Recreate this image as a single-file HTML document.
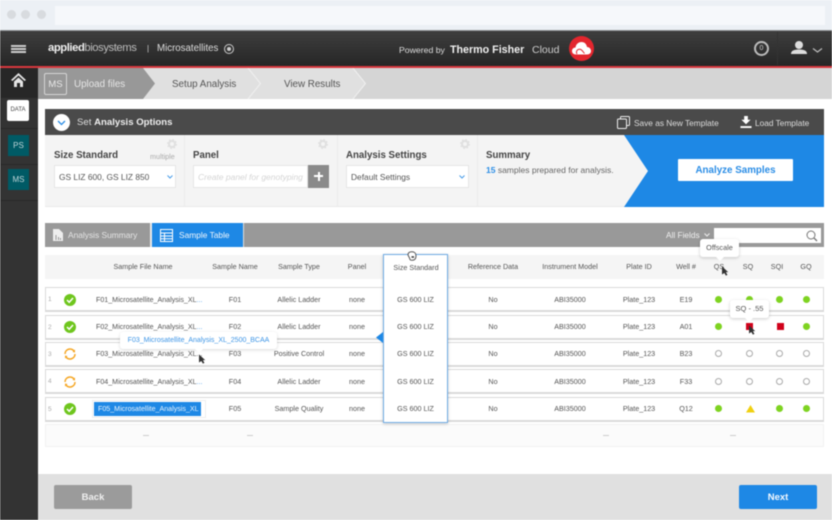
<!DOCTYPE html>
<html><head><meta charset="utf-8">
<style>
html,body{margin:0;padding:0;width:832px;height:520px;overflow:hidden;background:#fff}
body{font-family:"Liberation Sans",sans-serif;position:relative;color:#555}
#p{position:absolute;left:0;top:0;width:832px;height:520px;overflow:hidden;filter:blur(.5px)}
#p div,#p svg{position:absolute}
.t{white-space:nowrap;line-height:12px;height:12px}
.c{transform:translateX(-50%);text-align:center;white-space:nowrap;line-height:12px;height:12px;font-size:7.2px;color:#555}
.f{font-size:7.1px;color:#555;left:96px}
.row{left:45px;width:777px;border:1px solid #dadada;border-bottom:2px solid #dadada;height:22px;background:#fff}
.n{font-size:6.5px;color:#aaa;left:48px}
.g{width:7px;height:7px;border-radius:50%;background:#7ed321}
.o{width:5px;height:5px;border-radius:50%;border:1px solid #aaa;background:#fff}
</style></head><body><div id="p">

<!-- browser chrome -->
<div style="left:0;top:0;width:832px;height:30px;background:#ecf0f5"></div>
<div style="left:7px;top:10px;width:9px;height:9px;border-radius:50%;background:#d8dbdf"></div>
<div style="left:21px;top:10px;width:9px;height:9px;border-radius:50%;background:#d8dbdf"></div>
<div style="left:37px;top:10px;width:9px;height:9px;border-radius:50%;background:#d8dbdf"></div>
<div style="left:55px;top:6px;width:770px;height:19px;background:#f6f8fb"></div>

<!-- header -->
<div style="left:0;top:30px;width:832px;height:36px;background:linear-gradient(#3e3e3e,#262626);border-top:1px solid #8d9093;box-sizing:border-box"></div>
<div style="left:0;top:66px;width:832px;height:2px;background:#d9383e"></div>
<div style="left:11px;top:45px;width:15px;height:2px;background:#ccc"></div>
<div style="left:11px;top:48px;width:15px;height:2px;background:#ccc"></div>
<div style="left:11px;top:51px;width:15px;height:2px;background:#ccc"></div>
<div class="t" style="left:48px;top:42px;font-size:11.3px;color:#eee;letter-spacing:-.45px;line-height:13px;height:13px"><b>applied</b><span style="color:#bbb">biosystems</span></div>
<div class="t" style="left:147px;top:43px;font-size:8px;color:#ccc">|</div>
<div class="t" style="left:157px;top:43px;font-size:9.7px;color:#ddd">Microsatellites</div>
<div style="left:224px;top:44px;width:8px;height:8px;border:1px solid #ccc;border-radius:50%"></div>
<div style="left:227px;top:47px;width:4px;height:4px;background:#ccc;border-radius:50%"></div>
<div class="t" style="left:399px;top:44px;font-size:8.7px;color:#ddd">Powered by</div>
<div class="t" style="left:450px;top:44px;font-size:10.7px;font-weight:bold;color:#f0f0f0">Thermo Fisher</div>
<div class="t" style="left:532px;top:44px;font-size:10.5px;color:#ccc">Cloud</div>
<div style="left:569px;top:36px;width:25px;height:25px;border-radius:50%;background:#e3262e"></div>
<svg style="left:572px;top:41px" width="19" height="15" viewBox="0 0 19 15"><path d="M4 13.500C1.500 13.500 0 12 0 10S1.500 6.500 3.500 6.500C4 3 6.500 1 9.500 1S14.500 3 15 6C17.500 6 19 8 19 10S17.500 13.500 15 13.500Z" fill="#fff"/><path d="M5 13a3 3 0 0 1 5-3.500l1 1M12.500 12.500l-2-2.500" stroke="#e3262e" stroke-width="1" fill="none"/></svg>
<div style="left:754px;top:41px;width:11px;height:11px;border:2px solid #bbb;border-radius:50%;font-size:7px;line-height:11px;text-align:center;color:#ccc">0</div>
<div style="left:777px;top:32px;width:1px;height:33px;background:#333"></div>
<svg style="left:790px;top:40px" width="34" height="16" viewBox="0 0 34 16"><circle cx="9" cy="5" r="4" fill="#ddd"/><path d="M1 14C1 10.500 4 9.500 9 9.500S17 10.500 17 14Z" fill="#ddd"/><path d="M23 8.500l4.500 3.500 4.500-3.500" stroke="#bbb" stroke-width="1.200" fill="none"/></svg>

<!-- sidebar -->
<div style="left:0;top:68px;width:38px;height:452px;background:#333"></div>
<div style="left:1px;top:68px;width:37px;height:30px;background:#272727"></div>
<div style="left:1px;top:128px;width:37px;height:1px;background:#292929"></div>
<div style="left:1px;top:164px;width:37px;height:1px;background:#292929"></div>
<div style="left:1px;top:200px;width:37px;height:1px;background:#292929"></div>
<svg style="left:11px;top:73px" width="15" height="14" viewBox="0 0 15 14"><path d="M0 7L7.500 0 15 7 13.500 8 7.500 2.500 1.500 8Z M3 8.500L7.500 4.500 12 8.500V14H9V10H6V14H3Z" fill="#e4e4e4"/></svg>
<div style="left:7px;top:100px;width:22px;height:21px;background:#fff;border-radius:2px;font-size:6px;line-height:21px;text-align:center;color:#444">DATA</div>
<div style="left:8px;top:135px;width:21px;height:21px;background:#005a65;font-size:8px;line-height:21px;text-align:center;color:#bfd5d8">PS</div>
<div style="left:8px;top:169px;width:21px;height:21px;background:#005a65;font-size:8px;line-height:21px;text-align:center;color:#bfd5d8">MS</div>

<!-- breadcrumb -->
<div style="left:38px;top:68px;width:794px;height:31px;background:#d5d5d5"></div>
<svg style="left:38px;top:68px" width="340" height="31" viewBox="0 0 340 31">
<path d="M105 0H315L327.500 15.500 315 31H105Z" fill="#e0e0e0"/>
<path d="M315 0L327.500 15.500 315 31" fill="none" stroke="#f0f0f0"/>
<path d="M210 0L222.500 15.500 210 31" fill="none" stroke="#f0f0f0"/>
<path d="M0 0H105L117 15.500 105 31H0Z" fill="#989898"/>
</svg>
<div style="left:44px;top:73px;width:21px;height:20px;border:1px solid #d5d5d5;border-radius:2px;font-size:9.600px;line-height:21px;text-align:center;color:#e8e8e8">MS</div>
<div class="t" style="left:74px;top:79px;font-size:9.800px;color:#e6e6e6">Upload files</div>
<div class="t" style="left:172px;top:79px;font-size:9.800px;color:#555">Setup Analysis</div>
<div class="t" style="left:284px;top:79px;font-size:9.800px;color:#555">View Results</div>

<!-- options header -->
<div style="left:45px;top:109px;width:779px;height:26px;background:#4a4a4a"></div>
<div style="left:53px;top:114px;width:17px;height:17px;border-radius:50%;background:#fff"></div>
<svg style="left:57px;top:120px" width="9" height="6" viewBox="0 0 9 6"><path d="M1 1l3.500 3.500L8 1" stroke="#2a8de6" stroke-width="1.300" fill="none"/></svg>
<div class="t" style="left:77px;top:117px;font-size:9.600px;color:#ddd">Set <b style="color:#eee">Analysis Options</b></div>
<svg style="left:617px;top:116px" width="13" height="13" viewBox="0 0 13 13"><rect x="3.500" y=".5" width="9" height="9" rx="1" fill="none" stroke="#eee"/><rect x=".5" y="3" width="9" height="9.500" rx="1" fill="#4a4a4a" stroke="#eee"/></svg>
<div class="t" style="left:634px;top:117px;font-size:8.300px;color:#ddd">Save as New Template</div>
<svg style="left:740px;top:116px" width="12" height="12" viewBox="0 0 12 13"><path d="M4 0H8V4H11L6 9 1 4H4Z M0 11H12V13H0Z" fill="#fff"/></svg>
<div class="t" style="left:755px;top:117px;font-size:8.300px;color:#ddd">Load Template</div>

<!-- options body -->
<div style="left:45px;top:135px;width:779px;height:72px;background:#f4f4f4;border-bottom:1px solid #e8e8e8;box-sizing:border-box"></div>
<div style="left:184px;top:135px;width:1px;height:72px;background:#ebebeb"></div>
<div style="left:337px;top:135px;width:1px;height:72px;background:#ebebeb"></div>
<div style="left:477px;top:135px;width:1px;height:72px;background:#ebebeb"></div>
<svg style="left:624px;top:135px" width="200" height="72" viewBox="0 0 200 72"><path d="M0 0H200V72H0L24 36Z" fill="#1e88e5"/></svg>
<svg style="left:167px;top:139px" width="10" height="10" viewBox="0 0 10 10"><circle cx="5" cy="5" r="3" fill="none" stroke="#e0e0e0" stroke-width="2"/><circle cx="5" cy="5" r="4.300" fill="none" stroke="#e0e0e0" stroke-width="1.400" stroke-dasharray="1.700 1.700"/></svg>
<svg style="left:318px;top:139px" width="10" height="10" viewBox="0 0 10 10"><circle cx="5" cy="5" r="3" fill="none" stroke="#e0e0e0" stroke-width="2"/><circle cx="5" cy="5" r="4.300" fill="none" stroke="#e0e0e0" stroke-width="1.400" stroke-dasharray="1.700 1.700"/></svg>
<svg style="left:460px;top:139px" width="10" height="10" viewBox="0 0 10 10"><circle cx="5" cy="5" r="3" fill="none" stroke="#e0e0e0" stroke-width="2"/><circle cx="5" cy="5" r="4.300" fill="none" stroke="#e0e0e0" stroke-width="1.400" stroke-dasharray="1.700 1.700"/></svg>

<div class="t" style="left:54px;top:150px;font-size:9.700px;font-weight:bold;color:#444">Size Standard</div>
<div class="t" style="left:150px;top:151px;font-size:7.200px;color:#aaa">multiple</div>
<div style="left:54px;top:165px;width:122px;height:23px;background:#fff;border:1px solid #e6e6e6;box-sizing:border-box"></div>
<div class="t" style="left:59px;top:171px;font-size:8.400px;color:#555">GS LIZ 600, GS LIZ 850</div>
<svg style="left:167px;top:175px" width="6" height="4" viewBox="0 0 6 4"><path d="M.5 .5L3 3 5.500 .5" stroke="#4a9de8" fill="none"/></svg>

<div class="t" style="left:193px;top:150px;font-size:9.700px;font-weight:bold;color:#444">Panel</div>
<div style="left:193px;top:165px;width:115px;height:23px;background:#fff;border:1px solid #e6e6e6;box-sizing:border-box"></div>
<div class="t" style="left:198px;top:171px;font-size:8.500px;font-style:italic;color:#d5d5d5">Create panel for genotyping</div>
<div style="left:308px;top:165px;width:21px;height:23px;background:#8a8a8a"></div>
<div style="left:314px;top:175px;width:9px;height:2px;background:#fff"></div>
<div style="left:317.500px;top:171.500px;width:2px;height:9px;background:#fff"></div>

<div class="t" style="left:346px;top:150px;font-size:9.700px;font-weight:bold;color:#444">Analysis Settings</div>
<div style="left:346px;top:165px;width:123px;height:23px;background:#fff;border:1px solid #e6e6e6;box-sizing:border-box"></div>
<div class="t" style="left:351px;top:171px;font-size:8.400px;color:#555">Default Settings</div>
<svg style="left:459px;top:175px" width="6" height="4" viewBox="0 0 6 4"><path d="M.5 .5L3 3 5.500 .5" stroke="#4a9de8" fill="none"/></svg>

<div class="t" style="left:486px;top:150px;font-size:9.700px;font-weight:bold;color:#444">Summary</div>
<div class="t" style="left:486px;top:164px;font-size:8.500px;color:#666"><b style="color:#2a8de6">15</b> samples prepared for analysis.</div>
<div style="left:678px;top:159px;width:115px;height:22px;background:#fff;border-radius:1px;font-size:9.800px;font-weight:bold;line-height:24px;text-align:center;color:#2a8de6">Analyze Samples</div>

<!-- tabs -->
<div style="left:45px;top:223px;width:779px;height:24px;background:#999"></div>
<div style="left:150px;top:223px;width:2px;height:24px;background:#e8e8e8"></div>
<div style="left:152px;top:223px;width:91px;height:24px;background:#1e88e5;border-right:1px solid #ddd"></div>
<svg style="left:53px;top:229px" width="10" height="12" viewBox="0 0 10 12"><path d="M0 0H6L10 4V12H0Z" fill="#eee"/><path d="M3 11V6M5.500 11V8M7.500 11V9" stroke="#999"/></svg>
<div class="t" style="left:68px;top:229px;font-size:8.400px;color:#e4e4e4">Analysis Summary</div>
<svg style="left:160px;top:229px" width="13" height="13" viewBox="0 0 13 13"><path d="M.5 .5H12.500V12.500H.5ZM.5 4H12.500M.5 7H12.500M.5 9.800H12.500M4.500 4V12.500" stroke="#fff" fill="none"/></svg>
<div class="t" style="left:179px;top:229px;font-size:8.400px;color:#f0f6fc">Sample Table</div>
<div class="t" style="left:666px;top:229px;font-size:8.300px;color:#f0f0f0">All Fields</div>
<svg style="left:704px;top:233px" width="6" height="4" viewBox="0 0 6 4"><path d="M.5 .5L3 3 5.500 .5" stroke="#eee" fill="none"/></svg>
<div style="left:714px;top:228px;width:107px;height:15px;background:#fff"></div>
<svg style="left:806px;top:230px" width="12" height="12" viewBox="0 0 12 12"><circle cx="5" cy="5" r="4" stroke="#777" fill="none"/><path d="M8 8l3 3" stroke="#777" stroke-width="1.300"/></svg>

<!-- table header -->
<div style="left:45px;top:255px;width:779px;height:24px;background:#f5f5f5"></div>
<div class="c" style="left:143px;top:261px">Sample File Name</div>
<div class="c" style="left:235px;top:261px">Sample Name</div>
<div class="c" style="left:299px;top:261px">Sample Type</div>
<div class="c" style="left:357px;top:261px">Panel</div>
<div class="c" style="left:493px;top:261px">Reference Data</div>
<div class="c" style="left:570px;top:261px">Instrument Model</div>
<div class="c" style="left:639px;top:261px">Plate ID</div>
<div class="c" style="left:686px;top:261px">Well #</div>
<div class="c" style="left:719px;top:261px">QS</div>
<div class="c" style="left:748px;top:261px">SQ</div>
<div class="c" style="left:777px;top:261px">SQI</div>
<div class="c" style="left:806px;top:261px">GQ</div>

<!-- rows -->
<div class="row" style="top:287px"></div>
<div class="row" style="top:315px"></div>
<div class="row" style="top:342px"></div>
<div class="row" style="top:369px"></div>
<div class="row" style="top:397px"></div>
<div style="left:45px;top:424px;width:779px;height:23px;background:#fbfbfb;border:1px solid #f2f2f2;box-sizing:border-box"></div>
<div style="left:143px;top:435px;width:6px;height:1px;background:#ccc"></div>
<div style="left:247px;top:435px;width:6px;height:1px;background:#ccc"></div>
<div style="left:603px;top:435px;width:6px;height:1px;background:#ccc"></div>
<div style="left:730px;top:435px;width:6px;height:1px;background:#ccc"></div>

<div class="t n" style="top:294px">1</div>
<div class="t n" style="top:322px">2</div>
<div class="t n" style="top:349px">3</div>
<div class="t n" style="top:376px">4</div>
<div class="t n" style="top:404px">5</div>

<!-- status icons -->
<svg style="left:64px;top:294px" width="12" height="12" viewBox="0 0 12 12"><circle cx="6" cy="6" r="6" fill="#6fc61e"/><path d="M3 6l2.200 2.300L9 4" stroke="#fff" stroke-width="1.500" fill="none"/></svg>
<svg style="left:64px;top:321px" width="12" height="12" viewBox="0 0 12 12"><circle cx="6" cy="6" r="6" fill="#6fc61e"/><path d="M3 6l2.200 2.300L9 4" stroke="#fff" stroke-width="1.500" fill="none"/></svg>
<svg style="left:64px;top:348px" width="12" height="12" viewBox="0 0 12 12"><path d="M1 6a5 5 0 0 1 9-3M11 6a5 5 0 0 1-9 3" stroke="#f5a623" stroke-width="1.500" fill="none"/><path d="M8.500 4L11 1.500V4.500ZM3.500 8L1 10.500V7.500Z" fill="#f5a623"/></svg>
<svg style="left:64px;top:376px" width="12" height="12" viewBox="0 0 12 12"><path d="M1 6a5 5 0 0 1 9-3M11 6a5 5 0 0 1-9 3" stroke="#f5a623" stroke-width="1.500" fill="none"/><path d="M8.500 4L11 1.500V4.500ZM3.500 8L1 10.500V7.500Z" fill="#f5a623"/></svg>
<svg style="left:64px;top:403px" width="12" height="12" viewBox="0 0 12 12"><circle cx="6" cy="6" r="6" fill="#6fc61e"/><path d="M3 6l2.200 2.300L9 4" stroke="#fff" stroke-width="1.500" fill="none"/></svg>

<!-- file names -->
<div class="t f" style="top:294px">F01_Microsatellite_Analysis_XL<span style="color:#4a9de8">...</span></div>
<div class="t f" style="top:321px">F02_Microsatellite_Analysis_XL<span style="color:#4a9de8">...</span></div>
<div class="t f" style="top:348px">F03_Microsatellite_Analysis_XL...</div>
<div class="t f" style="top:376px">F04_Microsatellite_Analysis_XL<span style="color:#4a9de8">...</span></div>
<div style="left:92px;top:400px;width:114px;height:18px;border:1px solid #eee;box-sizing:border-box"></div>
<div style="left:94px;top:402px;width:107px;height:14px;background:#1e88e5"></div>
<div class="t" style="left:98px;top:403px;font-size:7.100px;color:#e8f3fc">F05_Microsatellite_Analysis_XL</div>

<!-- text columns -->
<div class="c" style="left:235px;top:294px">F01</div><div class="c" style="left:299px;top:294px">Allelic Ladder</div><div class="c" style="left:357px;top:294px">none</div><div class="c" style="left:493px;top:294px">No</div><div class="c" style="left:570px;top:294px">ABI35000</div><div class="c" style="left:639px;top:294px">Plate_123</div><div class="c" style="left:686px;top:294px">E19</div>
<div class="c" style="left:235px;top:321px">F02</div><div class="c" style="left:299px;top:321px">Allelic Ladder</div><div class="c" style="left:357px;top:321px">none</div><div class="c" style="left:493px;top:321px">No</div><div class="c" style="left:570px;top:321px">ABI35000</div><div class="c" style="left:639px;top:321px">Plate_123</div><div class="c" style="left:686px;top:321px">A01</div>
<div class="c" style="left:235px;top:348px">F03</div><div class="c" style="left:299px;top:348px">Positive Control</div><div class="c" style="left:357px;top:348px">none</div><div class="c" style="left:493px;top:348px">No</div><div class="c" style="left:570px;top:348px">ABI35000</div><div class="c" style="left:639px;top:348px">Plate_123</div><div class="c" style="left:686px;top:348px">B23</div>
<div class="c" style="left:235px;top:376px">F04</div><div class="c" style="left:299px;top:376px">Allelic Ladder</div><div class="c" style="left:357px;top:376px">none</div><div class="c" style="left:493px;top:376px">No</div><div class="c" style="left:570px;top:376px">ABI35000</div><div class="c" style="left:639px;top:376px">Plate_123</div><div class="c" style="left:686px;top:376px">F33</div>
<div class="c" style="left:235px;top:403px">F05</div><div class="c" style="left:299px;top:403px">Sample Quality</div><div class="c" style="left:357px;top:403px">none</div><div class="c" style="left:493px;top:403px">No</div><div class="c" style="left:570px;top:403px">ABI35000</div><div class="c" style="left:639px;top:403px">Plate_123</div><div class="c" style="left:686px;top:403px">Q12</div>

<!-- status dots -->
<div class="g" style="left:715px;top:296px"></div><div class="g" style="left:746px;top:296px"></div><div class="g" style="left:776px;top:296px"></div><div class="g" style="left:803px;top:296px"></div>
<div class="g" style="left:715px;top:323px"></div><div style="left:746px;top:323px;width:7px;height:7px;background:#d0021b"></div><div style="left:777px;top:323px;width:7px;height:7px;background:#d0021b"></div><div class="g" style="left:803px;top:323px"></div>
<div class="o" style="left:715px;top:350px"></div><div class="o" style="left:746px;top:350px"></div><div class="o" style="left:776px;top:350px"></div><div class="o" style="left:803px;top:350px"></div>
<div class="o" style="left:715px;top:378px"></div><div class="o" style="left:746px;top:378px"></div><div class="o" style="left:776px;top:378px"></div><div class="o" style="left:803px;top:378px"></div>
<div class="g" style="left:715px;top:405px"></div>
<svg style="left:746px;top:405px" width="9" height="8" viewBox="0 0 9 8"><path d="M4.500 0L9 7.500H0Z" fill="#f0d010"/></svg>
<div class="g" style="left:776px;top:405px"></div><div class="g" style="left:803px;top:405px"></div>

<!-- size standard overlay -->
<div style="left:383px;top:254px;width:65px;height:169px;background:#fff;border:1px solid #6fabe4;box-sizing:border-box;box-shadow:0 1px 3px rgba(0,0,0,.2)"></div>
<div class="c" style="left:416px;top:262px">Size Standard</div>
<div class="c" style="left:415.500px;top:294px">GS 600 LIZ</div>
<div class="c" style="left:415.500px;top:321px">GS 600 LIZ</div>
<div class="c" style="left:415.500px;top:348px">GS 600 LIZ</div>
<div class="c" style="left:415.500px;top:376px">GS 600 LIZ</div>
<div class="c" style="left:415.500px;top:403px">GS 600 LIZ</div>
<svg style="left:376px;top:332px" width="7" height="11" viewBox="0 0 7 11"><path d="M7 0V11L0 5.500Z" fill="#1e88e5"/></svg>
<svg style="left:407px;top:251px" width="10" height="10" viewBox="0 0 10 10"><path d="M1 4C1 1.500 3 .8 5 .8S9 2 9 5 7.500 9.300 5 9.300 3 8 2.500 7Z" fill="#fff" stroke="#555"/><path d="M4.500 6H7" stroke="#333" stroke-width="1.500"/></svg>

<!-- tooltips -->
<div style="left:120px;top:332px;width:157px;height:17px;background:#fff;border-radius:3px;box-shadow:0 1px 3px rgba(0,0,0,.15);font-size:7px;line-height:17px;text-align:center;color:#3d95e6">F03_Microsatellite_Analysis_XL_2500_BCAA</div>
<svg style="left:195px;top:349px" width="8" height="4" viewBox="0 0 8 4"><path d="M0 0H8L4 4Z" fill="#fff"/></svg>
<div style="left:700px;top:239px;width:39px;height:18px;background:#fff;border-radius:3px;box-shadow:0 1px 3px rgba(0,0,0,.2);font-size:7.300px;line-height:18px;text-align:center;color:#555">Offscale</div>
<svg style="left:716px;top:257px" width="8" height="4" viewBox="0 0 8 4"><path d="M0 0H8L4 4Z" fill="#fff"/></svg>
<div style="left:730px;top:300px;width:39px;height:18px;background:#fff;border-radius:3px;box-shadow:0 1px 3px rgba(0,0,0,.2);font-size:7.500px;line-height:18px;text-align:center;color:#555">SQ - .55</div>
<svg style="left:745px;top:318px" width="8" height="4" viewBox="0 0 8 4"><path d="M0 0H8L4 4Z" fill="#fff"/></svg>

<!-- cursors -->
<svg style="left:199px;top:354px" width="7" height="10" viewBox="0 0 9 12"><path d="M0 0L8 7.500H5L7 11 5 12 3 8.500 0 10.500Z" fill="#333"/></svg>
<svg style="left:722px;top:266px" width="7" height="10" viewBox="0 0 9 12"><path d="M0 0L8 7.500H5L7 11 5 12 3 8.500 0 10.500Z" fill="#333"/></svg>
<svg style="left:749px;top:325px" width="7" height="10" viewBox="0 0 9 12"><path d="M0 0L8 7.500H5L7 11 5 12 3 8.500 0 10.500Z" fill="#333"/></svg>

<!-- footer -->
<div style="left:38px;top:474px;width:794px;height:46px;background:#e0e0e0"></div>
<div style="left:54px;top:485px;width:78px;height:24px;background:#9b9b9b;border-radius:2px;font-size:9.500px;font-weight:bold;line-height:26px;text-align:center;color:#f0f0f0">Back</div>
<div style="left:739px;top:485px;width:78px;height:24px;background:#1e88e5;border-radius:2px;font-size:9.500px;font-weight:bold;line-height:26px;text-align:center;color:#f4f9fe">Next</div>

</div></body></html>
